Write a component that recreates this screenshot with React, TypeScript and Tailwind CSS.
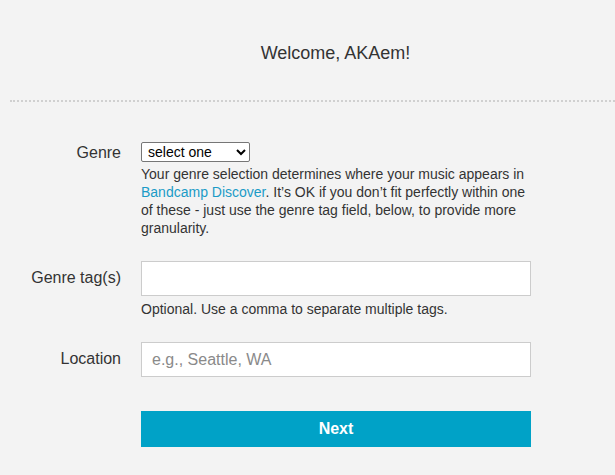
export default function App() {
  return (
    <div className="min-h-[475px] bg-[#f3f3f3] font-['Liberation_Sans',Arial,sans-serif] text-[#333]">
      <div className="pt-[42px] pb-[36px] pl-[56px] text-center text-[18px] leading-[22px]">
        Welcome, AKAem!
      </div>
      <div className="ml-[10px] border-t-2 border-dotted border-[#d0d0d0]" />

      <div className="pt-[38px] flex flex-col">
        {/* Genre */}
        <div className="flex">
          <label className="w-[121px] shrink-0 text-right text-[16px] leading-[20px] pt-[3px]">Genre</label>
          <div className="ml-[20px] w-[390px]">
            <select className="h-[20px] w-[109px] border border-[#767676] rounded-[2px] bg-white text-[14px] leading-[18px] text-black pl-[2px]">
              <option>select one</option>
            </select>
            <p className="mt-[1px] text-[14px] leading-[18px]">
              Your genre selection determines where your music appears in{' '}
              <a className="text-[#1b9bc7]">Bandcamp Discover</a>. It’s OK if you don’t fit perfectly within one of
              these - just use the genre tag field, below, to provide more granularity.
            </p>
          </div>
        </div>

        {/* Genre tags */}
        <div className="flex mt-[24px]">
          <label className="w-[121px] shrink-0 text-right text-[16px] leading-[20px] pt-[7px]">Genre tag(s)</label>
          <div className="ml-[20px] w-[390px]">
            <input className="block h-[35px] w-full border border-[#cccccc] bg-white px-[10px] text-[16px] outline-none" />
            <p className="mt-[4px] text-[14px] leading-[18px]">Optional. Use a comma to separate multiple tags.</p>
          </div>
        </div>

        {/* Location */}
        <div className="flex mt-[24px]">
          <label className="w-[121px] shrink-0 text-right text-[16px] leading-[20px] pt-[7px]">Location</label>
          <div className="ml-[20px] w-[390px]">
            <input
              placeholder="e.g., Seattle, WA"
              className="block h-[35px] w-full border border-[#cccccc] bg-white px-[10px] text-[16px] outline-none placeholder:text-[#8a8a8a]"
            />
          </div>
        </div>

        <div className="flex mt-[34px]">
          <div className="w-[121px] shrink-0" />
          <button className="ml-[20px] h-[36px] w-[390px] bg-[#00a2c7] text-white text-[16px] font-bold">Next</button>
        </div>
      </div>
    </div>
  )
}
